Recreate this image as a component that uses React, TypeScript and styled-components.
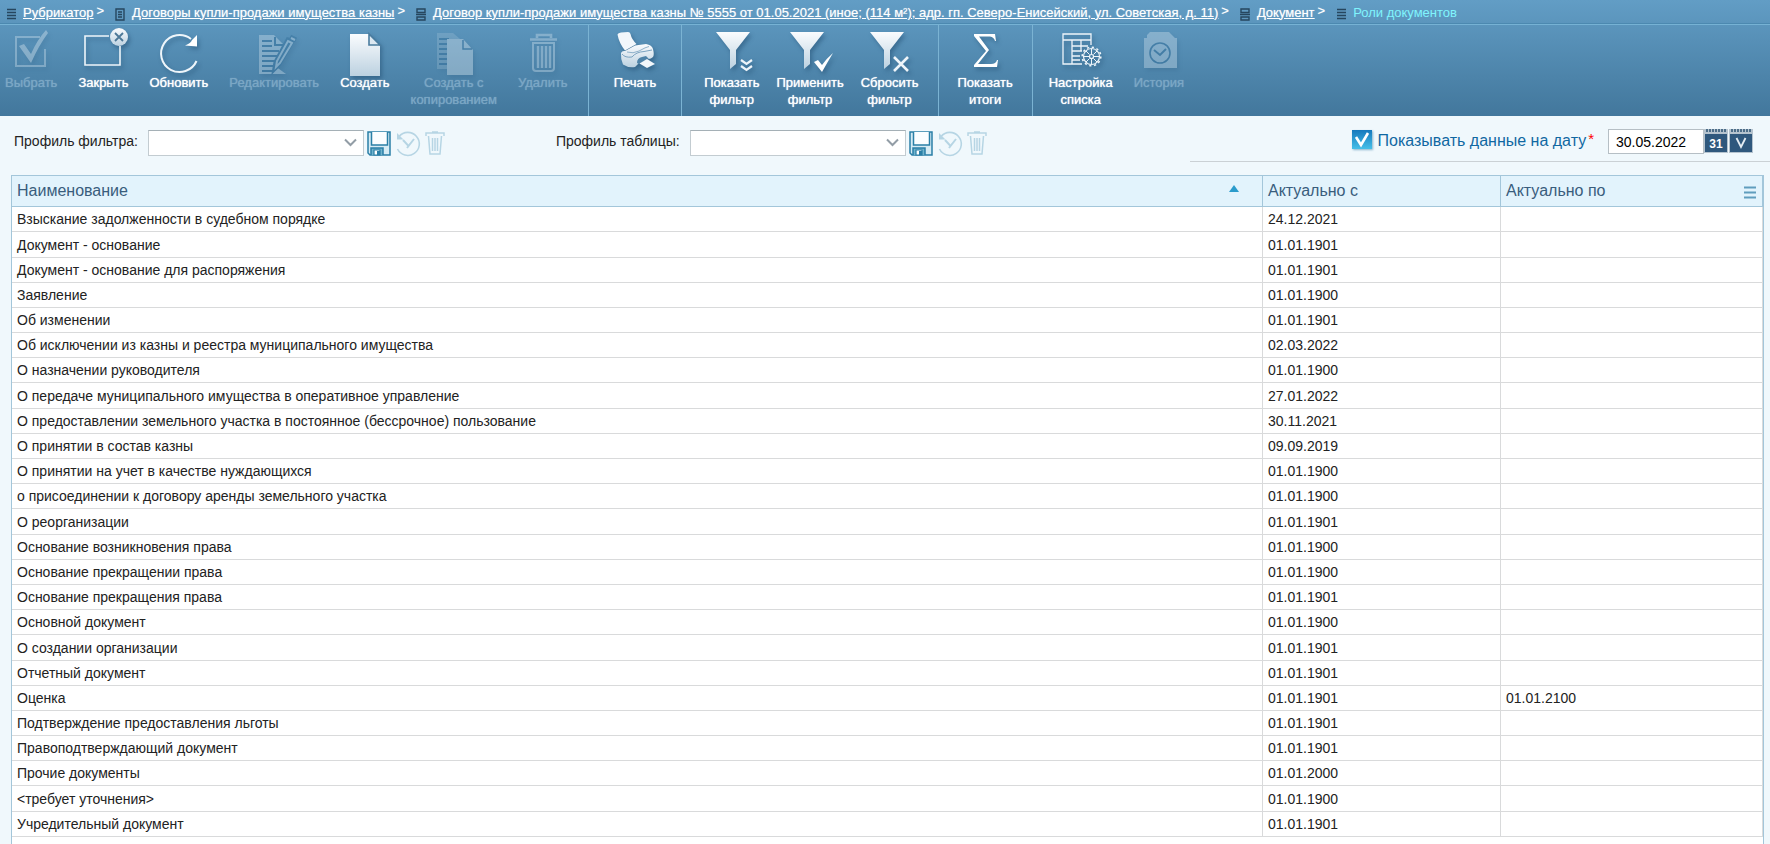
import React from "react";
import styled, { createGlobalStyle } from "styled-components";

const Global = createGlobalStyle`
  *, *::before, *::after { box-sizing: border-box; }
  html, body { margin: 0; background: #f0f8fc; }
  body, button, input, select { font-family: "Liberation Sans", Arial, sans-serif; }
`;

const Page = styled.div`
  display: flex;
  flex-direction: column;
  height: 100vh;
  overflow: hidden;
`;

const Header = styled.header`
  flex: none;
  height: 116px;
  background: linear-gradient(#629dc5, #42779c);
`;

const Crumbs = styled.nav`
  display: flex;
  align-items: center;
  height: 25px;
  padding: 1px 6px 0;
  font-size: 13px;
  line-height: 16px;
  white-space: nowrap;
  color: #fff;
  text-shadow: 0 0 1px rgba(255, 255, 255, 0.6);
  border-bottom: 1px solid #76b2d4;
  box-shadow: inset 0 -1px 0 #4c89b0;
`;

const CrumbIcon = styled.svg`
  flex: none;
  width: 10px;
  height: 13px;
  margin: 3px 7px 0 0;
`;

const CrumbLink = styled.a`
  color: #fff;
  text-decoration: underline;
`;

const CrumbArrow = styled.span`
  margin: 0 11px 3px 3px;
`;

const CrumbCurrent = styled.span`
  color: #80f4fd;
  text-shadow: none;
`;

const Toolbar = styled.div`
  display: flex;
  height: 91px;
`;

const Group = styled.div<{ $left: number; $right: number; $gap?: number; $last?: boolean }>`
  display: flex;
  align-items: flex-start;
  gap: ${(p) => p.$gap ?? 21}px;
  padding: 0 ${(p) => p.$right}px 0 ${(p) => p.$left}px;
  border-right: ${(p) => (p.$last ? "none" : "1px solid #7bb3d3")};
`;

const ToolButton = styled.button`
  display: flex;
  flex-direction: column;
  align-items: center;
  padding: 0;
  border: 0;
  background: none;
  color: #fff;
  font-size: 13px;
  line-height: 17px;
  white-space: pre;
  text-align: center;
  text-shadow: 0 0 1px currentColor;
  cursor: pointer;
  &:disabled {
    color: #7ba7c5;
    cursor: default;
  }
`;

const ToolIcon = styled.svg<{ $dim?: boolean }>`
  display: block;
  width: 48px;
  height: 49px;
  margin: 0 -4px;
  overflow: visible;
  opacity: ${(p) => (p.$dim ? 0.3 : 1)};
  filter: drop-shadow(2px 3px 2px rgba(20, 60, 95, 0.4));
`;

const Filters = styled.section`
  display: flex;
  align-items: flex-start;
  flex: none;
  height: 59px;
  padding-left: 14px;
`;

const Profile = styled.div`
  display: flex;
  align-items: center;
  padding-top: 14px;
  margin-right: 106px;
`;

const ProfileLabel = styled.label`
  font-size: 14px;
  line-height: 20px;
  margin: 0 10px 4px 0;
  color: #222;
`;

const SelectWrap = styled.span`
  position: relative;
  display: flex;
  margin-right: 3px;
`;

const ProfileSelect = styled.select`
  appearance: none;
  width: 216px;
  height: 26px;
  padding: 0 26px 0 6px;
  border: 1px solid #c3ccd1;
  border-top-color: #a5b0b6;
  border-radius: 0;
  background: #fff;
  font-size: 14px;
`;

const SelectChevron = styled.svg`
  position: absolute;
  right: 7px;
  top: 8px;
  width: 13px;
  height: 9px;
  pointer-events: none;
`;

const IconButton = styled.button<{ $width: number }>`
  display: block;
  width: ${(p) => p.$width}px;
  height: 25px;
  margin-right: 5px;
  padding: 0;
  border: 0;
  background: none;
  svg { display: block; overflow: visible; }
  &:disabled { opacity: 0.32; }
`;

const DatePanel = styled.div`
  display: flex;
  align-items: flex-start;
  width: 580px;
  height: 46px;
  margin-left: auto;
  padding: 13px 16px 0 0;
  border-bottom: 1px solid #cbd1d5;
  justify-content: flex-end;
`;

const DateToggle = styled.label`
  display: flex;
  align-items: flex-start;
  gap: 6px;
  font-size: 16px;
  line-height: 24px;
  color: #1068a2;
`;

const Tick = styled.input`
  appearance: none;
  width: 20px;
  height: 19px;
  margin: 1px 0 0;
  background:
    url("data:image/svg+xml,%3Csvg xmlns='http://www.w3.org/2000/svg' viewBox='0 0 20 19'%3E%3Cpath d='M4 7l5 8 7-12' fill='none' stroke='white' stroke-width='2.6'/%3E%3C/svg%3E"),
    linear-gradient(#1679bd, #46bfe8);
  box-shadow: 1px 1px 2px #8ab4cc;
`;

const Required = styled.sup`
  margin: 0 14px 0 2px;
  font-size: 15px;
  line-height: 20px;
  color: #f00;
`;

const DateInput = styled.input`
  width: 96px;
  height: 25px;
  padding: 0 7px;
  border: 1px solid #b6bfc5;
  border-radius: 0;
  background: #fff;
  font-size: 14px;
  color: #000;
`;

const CalendarButton = styled.button`
  width: 24px;
  height: 24px;
  margin-right: 1px;
  padding: 0;
  border: 0;
  background: none;
  svg { display: block; }
`;

const Grid = styled.main`
  flex: 1;
  min-height: 0;
  margin: 0 6px 0 11px;
  border: 1px solid #a3c6da;
  border-bottom: 0;
  background: #fff;
`;

const Table = styled.table`
  width: 100%;
  border-collapse: separate;
  border-spacing: 0;
  table-layout: fixed;
`;

const HeadCell = styled.th<{ $width?: number }>`
  width: ${(p) => (p.$width ? `${p.$width}px` : "auto")};
  height: 31px;
  padding: 0 5px;
  border-right: 1px solid #a3c6da;
  border-bottom: 1px solid #a3c6da;
  background: #e2f3fc;
  color: #395d7c;
  font-size: 16px;
  font-weight: 400;
  line-height: 20px;
  text-align: left;
`;

const HeadContent = styled.div`
  display: flex;
  align-items: center;
  justify-content: space-between;
`;

const SortArrow = styled.svg`
  width: 10px;
  height: 7px;
  margin: 0 18px 6px 0;
`;

const MenuButton = styled.button`
  width: 12px;
  height: 13px;
  margin: 3px 1px 0 0;
  padding: 0;
  border: 0;
  background: none;
  svg { display: block; }
`;

const Row = styled.tr`
  height: 25px;
  &:nth-child(11n + 2), &:nth-child(10n + 8) { height: 26px; }
`;

const Cell = styled.td`
  padding: 0 5px;
  border-right: 1px solid #d9dadb;
  border-bottom: 1px solid #d9dadb;
  color: #222;
  font-size: 14px;
  line-height: 20px;
`;

type IconProps = { dim?: boolean; children: React.ReactNode };

const Icon = ({ dim, children }: IconProps) => (
  <ToolIcon $dim={dim} viewBox="0 0 48 49" fill="none" stroke="#eef5fa" strokeWidth="2" aria-hidden="true">
    {children}
  </ToolIcon>
);

const fade = "url(#fade)";

const Funnel = () => <path d="M4 7H38L24 25V39L18 44V25Z" fill={fade} stroke="none" />;

const icons = {
  select: (
    <>
      <path d="M33 12H9V41H38V24" />
      <path d="M12 21L17 19L24 29Q30 15 39 5L41 8Q32 20 24 38Z" fill="#fff" stroke="none" />
    </>
  ),
  close: (
    <>
      <path d="M30 11H6V40H41V21" strokeWidth="1.6" />
      <circle cx="40" cy="12" r="9" fill={fade} stroke="none" />
      <path d="M36 8L44 16M44 8L36 16" stroke="#4c7897" strokeWidth="1.8" />
    </>
  ),
  refresh: (
    <>
      <path d="M36 14A18.5 18.5 0 1 0 41.500 36" strokeWidth="2" />
      <path d="M42 10V21.500L30 20.500Q36 18 37 15Z" fill="#fff" stroke="none" />
    </>
  ),
  edit: (
    <>
      <path d="M9 10H24L35 21L25 41L36 49H9Z" fill="#eef5fa" stroke="none" />
      <path d="M12 16H22M12 21H22M12 26H29M12 31H27M12 36H25M12 41H23M12 46H24" stroke="#1f5d8a" strokeWidth="2" />
      <path d="M25 12V20H33" stroke="#1f5d8a" />
      <path d="M42 16L29 39L25 43L26 37L38 15ZM40 12L46 15" stroke="#1f5d8a" strokeWidth="5" />
      <path d="M42 18L30 38L26 42L27 36L38 16ZM41 13L45 15" stroke="#eef5fa" strokeWidth="2" />
    </>
  ),
  create: (
    <>
      <path d="M9 9H28L39 21V51H9Z" fill={fade} stroke="none" />
      <path d="M28 9V20H39Z" fill="#dce8f1" stroke="#4a7c9f" strokeWidth="1.6" />
    </>
  ),
  copy: (
    <>
      <path d="M7 8H23L30 14V44H7Z" fill="#eef5fa" stroke="none" opacity=".5" />
      <path d="M9 14H19M9 19H17M9 24H17M9 29H17M9 34H17M9 39H17" stroke="#1f5d8a" />
      <path d="M17 14H33L43 25V50H17Z" fill="#fff" stroke="none" />
      <path d="M33 15V24H42" stroke="#1f5d8a" strokeWidth="1.5" />
    </>
  ),
  remove: (
    <>
      <path d="M18 13V10H32V13M11 14.500H38" strokeWidth="2.6" />
      <path d="M14 18H35V43Q35 46 32 46H17Q14 46 14 43Z" />
      <path d="M19 21V43M23 21V43M27 21V43M31 21V43" strokeWidth="2.4" />
    </>
  ),
  print: (
    <>
      <path d="M6.500 9.500Q7 8 10 7.500L17 7Q19 7 19.500 9Q20.500 14 25.500 19L14 25.500Q8 18 6.500 9.500Z" fill="#f2f7fb" stroke="none" />
      <path d="M10 28Q11 25.500 14 26L24 20.500L35 19Q41 20 42 24Q43.500 30 42 32Q39 35 35 33.500L29 37L24 42Q17 43 12 39.500Q9.500 34 10 28Z" fill={fade} stroke="none" />
      <path d="M11 29Q14 33 21 32Q25 27 33 26.500L41 25" stroke="#7ba3c0" strokeWidth="1" />
      <path d="M16 27Q22 29 28 26Q35 22 38 21.500" stroke="#8fb1ca" strokeWidth="1" />
      <path d="M26 38Q26 33 31 32L35 31L38 34L33 36L28 39Z" fill="#4f83a8" stroke="none" />
      <path d="M28.500 38.500L36 34L44 39L36 43Z" fill="#f2f7fb" stroke="none" />
    </>
  ),
  showFilter: (
    <>
      <g transform="translate(4 0)"><Funnel /></g>
      <path d="M33 35L38.500 39L44 35M33 41L38.500 45L44 41" strokeWidth="2.2" />
    </>
  ),
  applyFilter: (
    <>
      <Funnel />
      <path d="M28 37L32 35L36 40Q40 34 47 28Q41 38 36 47Z" fill="#fff" stroke="none" />
    </>
  ),
  resetFilter: (
    <>
      <Funnel />
      <path d="M28 32L42 46M42 32L28 46" strokeWidth="2.6" />
    </>
  ),
  totals: (
    <path
      d="M13 9H34L35 16H34Q33 12 29 11.500H18L28 25L17 39H30Q35 39 36 35H37L36 42H13V40L25 26L13 11Z"
      fill="#fff"
      stroke="none"
    />
  ),
  settings: (
    <>
      <path d="M34 20V9H6V39H25M6 15H34M15 15V39M24 15V26M15 21H31M15 26H25M15 31H23M15 35H23" strokeWidth="1.300" />
      <circle cx="34.500" cy="31.500" r="8" strokeWidth="1.200" />
      <circle cx="34.500" cy="31.500" r="9.300" strokeDasharray="2.200 2.670" strokeWidth="1.600" />
      <circle cx="34.500" cy="31.500" r="2" strokeWidth="1.200" />
      <path d="M34.500 24V29M34.500 34V39M27 31.500H32M37 31.500H42M29 26L32.500 29.500M36.500 33.500L40 37M40 26L36.500 29.500M32.500 33.500L29 37" strokeWidth="1" />
    </>
  ),
  history: (
    <>
      <path d="M12 13V10L15 7H34L40 13H42V43H9V13Z" fill="#eef5fa" stroke="none" />
      <circle cx="25" cy="28" r="10" stroke="#1f5d8a" strokeWidth="1.600" />
      <path d="M19 25L25 30L31 24" stroke="#1f5d8a" strokeWidth="2" />
    </>
  ),
};

type Tool = { icon: keyof typeof icons; label: string; off?: boolean };
type ToolGroup = { left: number; right: number; gap?: number; tools: Tool[] };

const toolGroups: ToolGroup[] = [
  {
    left: 5,
    right: 20,
    tools: [
      { icon: "select", label: "Выбрать", off: true },
      { icon: "close", label: "Закрыть" },
      { icon: "refresh", label: "Обновить" },
      { icon: "edit", label: "Редактировать", off: true },
      { icon: "create", label: "Создать" },
      { icon: "copy", label: "Создать с\nкопированием", off: true },
      { icon: "remove", label: "Удалить", off: true },
    ],
  },
  { left: 25, right: 25, tools: [{ icon: "print", label: "Печать" }] },
  {
    left: 22,
    right: 20,
    gap: 17,
    tools: [
      { icon: "showFilter", label: "Показать\nфильтр" },
      { icon: "applyFilter", label: "Применить\nфильтр" },
      { icon: "resetFilter", label: "Сбросить\nфильтр" },
    ],
  },
  { left: 18, right: 19, tools: [{ icon: "totals", label: "Показать\nитоги" }] },
  {
    left: 16,
    right: 16,
    tools: [
      { icon: "settings", label: "Настройка\nсписка" },
      { icon: "history", label: "История", off: true },
    ],
  },
];

type CrumbKind = "list" | "page" | "card";

const CrumbGlyph = ({ kind }: { kind: CrumbKind }) => (
  <CrumbIcon viewBox="0 0 10 13" fill="none" stroke="#26465e" strokeWidth="1.400" aria-hidden="true">
    {kind === "list" && <path d="M1 1.500H10M1 4.500H10M1 7.500H10M1 10.500H10" />}
    {kind === "page" && <path d="M1 1H9V12H1ZM3 4H7M3 6.500H7M3 9H7" />}
    {kind === "card" && <path d="M1 1H9V4.500H1ZM0 6.500H10M1 9H9V12H1Z" />}
  </CrumbIcon>
);

const crumbs: { kind: CrumbKind; text: string }[] = [
  { kind: "list", text: "Рубрикатор" },
  { kind: "page", text: "Договоры купли-продажи имущества казны" },
  {
    kind: "card",
    text: "Договор купли-продажи имущества казны № 5555 от 01.05.2021 (иное; (114 м²); адр. гп. Северо-Енисейский, ул. Советская, д. 11)",
  },
  { kind: "card", text: "Документ" },
];

const rows: [string, string, string?][] = [
  ["Взыскание задолженности в судебном порядке", "24.12.2021"],
  ["Документ - основание", "01.01.1901"],
  ["Документ - основание для распоряжения", "01.01.1901"],
  ["Заявление", "01.01.1900"],
  ["Об изменении", "01.01.1901"],
  ["Об исключении из казны и реестра муниципального имущества", "02.03.2022"],
  ["О назначении руководителя", "01.01.1900"],
  ["О передаче муниципального имущества в оперативное управление", "27.01.2022"],
  ["О предоставлении земельного участка в постоянное (бессрочное) пользование", "30.11.2021"],
  ["О принятии в состав казны", "09.09.2019"],
  ["О принятии на учет в качестве нуждающихся", "01.01.1900"],
  ["о присоединении к договору аренды земельного участка", "01.01.1900"],
  ["О реорганизации", "01.01.1901"],
  ["Основание возникновения права", "01.01.1900"],
  ["Основание прекращении права", "01.01.1900"],
  ["Основание прекращения права", "01.01.1901"],
  ["Основной документ", "01.01.1900"],
  ["О создании организации", "01.01.1901"],
  ["Отчетный документ", "01.01.1901"],
  ["Оценка", "01.01.1901", "01.01.2100"],
  ["Подтверждение предоставления льготы", "01.01.1901"],
  ["Правоподтверждающий документ", "01.01.1901"],
  ["Прочие документы", "01.01.2000"],
  ["<требует уточнения>", "01.01.1900"],
  ["Учредительный документ", "01.01.1901"],
];

const ProfilePicker = ({ id, label }: { id: string; label: string }) => (
  <Profile>
    <ProfileLabel htmlFor={id}>{label}</ProfileLabel>
    <SelectWrap>
      <ProfileSelect id={id} />
      <SelectChevron viewBox="0 0 13 9" fill="none" stroke="#929da6" strokeWidth="2" aria-hidden="true">
        <path d="M1 1.500L6.500 7L12 1.500" />
      </SelectChevron>
    </SelectWrap>
    <IconButton $width={24} aria-label="Сохранить">
      <svg width="24" height="25" viewBox="0 0 24 25" fill="none" stroke="#2a7fa6" strokeWidth="1.500">
        <path d="M1 1H23V24H3L1 22Z" fill="#d5ebf4" />
        <path d="M4.500 1V14H20.500V1" fill="#fafdff" />
        <path d="M4 24V17H16V24" fill="#6fb3cd" />
        <path d="M7 19H13V24H7Z" fill="#fff" strokeWidth="1.200" />
        <path d="M10 20H13V24H10Z" fill="#2a7fa6" stroke="none" />
      </svg>
    </IconButton>
    <IconButton $width={24} aria-label="Восстановить" disabled>
      <svg width="24" height="25" viewBox="0 0 24 25" fill="none" stroke="#3f8db2" strokeWidth="1.600">
        <path d="M3 5.500A11.500 11.500 0 1 1 1.500 18" />
        <path d="M1 2V8.500H7.500Z" fill="#3f8db2" stroke="none" />
        <path d="M7 9L12.500 15L18 8M11 17L14 13" strokeWidth="2" />
      </svg>
    </IconButton>
    <IconButton $width={20} aria-label="Удалить профиль" disabled>
      <svg width="20" height="25" viewBox="0 0 20 25" fill="none" stroke="#3f8db2" strokeWidth="1.500">
        <path d="M1 5V2H19V5M7 1H13M3.500 5L5 23H15L16.500 5M7.500 7V20M10 7V20M12.500 7V20" />
      </svg>
    </IconButton>
  </Profile>
);

const CalendarGlyph = ({ children }: { children: React.ReactNode }) => (
  <svg width="24" height="24" viewBox="0 0 24 24" aria-hidden="true">
    <rect width="24" height="24" fill="#b5c3ce" />
    <rect x="1" y="5" width="22" height="18" fill="#2f587d" />
    <path d="M2 1.500H23" stroke="#4d6e89" strokeWidth="3" strokeDasharray="2 1" />
    {children}
  </svg>
);

export default function App() {
  return (
    <Page>
      <Global />
      <Header>
        <Crumbs>
          {crumbs.map((c) => (
            <React.Fragment key={c.text}>
              <CrumbGlyph kind={c.kind} />
              <CrumbLink href="#">{c.text}</CrumbLink>
              <CrumbArrow>&gt;</CrumbArrow>
            </React.Fragment>
          ))}
          <CrumbGlyph kind="list" />
          <CrumbCurrent>Роли документов</CrumbCurrent>
        </Crumbs>
        <Toolbar>
          <svg width="0" height="0" aria-hidden="true">
            <linearGradient id="fade" x1="0" y1="0" x2="0" y2="1">
              <stop offset="0" stopColor="#fafcfe" />
              <stop offset="1" stopColor="#bcd1e0" />
            </linearGradient>
          </svg>
          {toolGroups.map((g, i) => (
            <Group key={i} $left={g.left} $right={g.right} $gap={g.gap} $last={i === toolGroups.length - 1}>
              {g.tools.map((t) => (
                <ToolButton key={t.icon} disabled={t.off}>
                  <Icon dim={t.off}>{icons[t.icon]}</Icon>
                  {t.label}
                </ToolButton>
              ))}
            </Group>
          ))}
        </Toolbar>
      </Header>
      <Filters>
        <ProfilePicker id="filter-profile" label="Профиль фильтра:" />
        <ProfilePicker id="table-profile" label="Профиль таблицы:" />
        <DatePanel>
          <DateToggle>
            <Tick type="checkbox" defaultChecked />
            Показывать данные на дату
          </DateToggle>
          <Required>*</Required>
          <DateInput aria-label="Дата" defaultValue="30.05.2022" />
          <CalendarButton aria-label="Календарь">
            <CalendarGlyph>
              <text x="12" y="19" textAnchor="middle" fontSize="12" fontWeight="700" fill="#fff">31</text>
            </CalendarGlyph>
          </CalendarButton>
          <CalendarButton aria-label="Выбрать дату">
            <CalendarGlyph>
              <path d="M7.500 9L12 18L16.500 9" fill="none" stroke="#e5edf3" strokeWidth="1.800" />
            </CalendarGlyph>
          </CalendarButton>
        </DatePanel>
      </Filters>
      <Grid>
        <Table>
          <thead>
            <tr>
              <HeadCell>
                <HeadContent>
                  Наименование
                  <SortArrow viewBox="0 0 10 7" aria-hidden="true">
                    <path d="M5 0L10 7H0Z" fill="#2a9bcb" />
                  </SortArrow>
                </HeadContent>
              </HeadCell>
              <HeadCell $width={238}>Актуально с</HeadCell>
              <HeadCell $width={262}>
                <HeadContent>
                  Актуально по
                  <MenuButton aria-label="Меню столбцов">
                    <svg width="12" height="13" viewBox="0 0 12 13">
                      <path d="M0 1.500H12M0 6.500H12M0 11.500H12" stroke="#5f9dbd" strokeWidth="2" />
                    </svg>
                  </MenuButton>
                </HeadContent>
              </HeadCell>
            </tr>
          </thead>
          <tbody>
            {rows.map(([name, from, to]) => (
              <Row key={name}>
                <Cell>{name}</Cell>
                <Cell>{from}</Cell>
                <Cell>{to}</Cell>
              </Row>
            ))}
          </tbody>
        </Table>
      </Grid>
    </Page>
  );
}
